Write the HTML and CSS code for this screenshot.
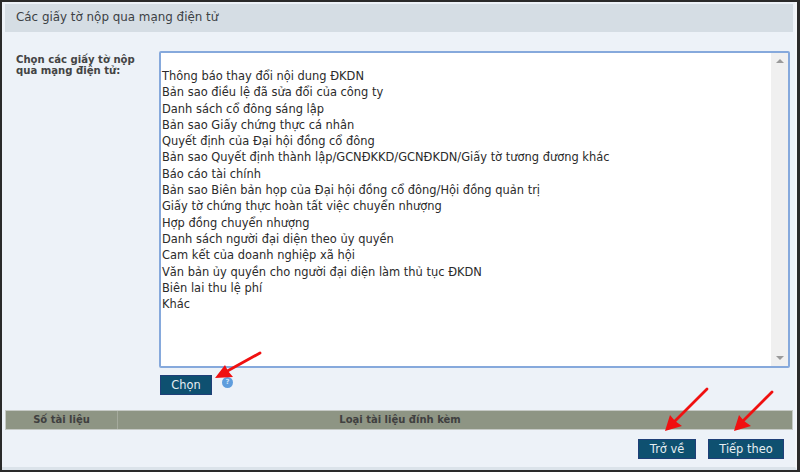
FILE: index.html
```html
<!DOCTYPE html>
<html lang="vi">
<head>
<meta charset="utf-8">
<title>Các giấy tờ nộp qua mạng điện tử</title>
<link rel="stylesheet" href="styles.css">
</head>
<body>
<div class="frame">
  <div class="panel">
    <h2 class="title">Các giấy tờ nộp qua mạng điện tử</h2>
    <div class="form-row">
      <label class="field-label">Chọn các giấy tờ nộp qua mạng điện tử:</label>
      <div class="field">
        <div class="listbox">
          <ul class="options">
            <li>Thông báo thay đổi nội dung ĐKDN</li>
            <li>Bản sao điều lệ đã sửa đổi của công ty</li>
            <li>Danh sách cổ đông sáng lập</li>
            <li>Bản sao Giấy chứng thực cá nhân</li>
            <li>Quyết định của Đại hội đồng cổ đông</li>
            <li>Bản sao Quyết định thành lập/GCNĐKKD/GCNĐKDN/Giấy tờ tương đương khác</li>
            <li>Báo cáo tài chính</li>
            <li>Bản sao Biên bản họp của Đại hội đồng cổ đông/Hội đồng quản trị</li>
            <li>Giấy tờ chứng thực hoàn tất việc chuyển nhượng</li>
            <li>Hợp đồng chuyển nhượng</li>
            <li>Danh sách người đại diện theo ủy quyền</li>
            <li>Cam kết của doanh nghiệp xã hội</li>
            <li>Văn bản ủy quyền cho người đại diện làm thủ tục ĐKDN</li>
            <li>Biên lai thu lệ phí</li>
            <li>Khác</li>
          </ul>
          <div class="scrollbar">
            <span class="arrow-up"></span>
            <span class="arrow-down"></span>
          </div>
        </div>
        <div class="choose-row">
          <button class="btn btn-choose">Chọn</button>
          <span class="help">?</span>
        </div>
      </div>
    </div>
    <div class="table-head">
      <div class="col-no">Số tài liệu</div>
      <div class="col-type">Loại tài liệu đính kèm</div>
    </div>
    <div class="actions">
      <button class="btn btn-back">Trở về</button>
      <button class="btn btn-next">Tiếp theo</button>
    </div>
  </div>
  <svg class="arrows" width="800" height="472" viewBox="0 0 800 472">
    <g fill="none" stroke="#f01010" stroke-width="2.8" stroke-linecap="round">
      <path d="M260 353 L222 374"/>
      <path d="M707 389 L669 427"/>
      <path d="M772 392 L737 427"/>
    </g>
    <g fill="#f01010">
      <path d="M215 378 L225 365 L228 371 L233 377 Z"/>
      <path d="M665 431 L670 415 L675 421 L682 426 Z"/>
      <path d="M734 431 L739 415 L744 421 L751 426 Z"/>
    </g>
  </svg>
</div>
</body>
</html>
```
FILE: styles.css
```css
* { box-sizing: border-box; }
html, body { margin: 0; padding: 0; }
body { width: 800px; height: 472px; overflow: hidden; background: #fff; }
.frame {
  position: relative;
  width: 800px;
  height: 472px;
  background: #2a2a2a;
  padding: 2px 3px 2px 2px;
}
.panel {
  height: 468px;
  background: #edf2f8;
  border-right: 2px solid #f4f6f8;
  border-bottom: 3px solid #dbe3ea;
  padding: 2px 2px 0 3px;
  font-family: "DejaVu Sans", sans-serif;
  color: #333;
}
.title {
  margin: 0;
  height: 28px;
  background: #d5dde4;
  padding-left: 11px;
  font-size: 11.9px;
  font-weight: 400;
  line-height: 27px;
  color: #3c4145;
}
.form-row {
  display: flex;
  margin-top: 19px;
}
.field-label {
  width: 154px;
  padding: 3px 0 0 11px;
  font-size: 10.1px;
  font-weight: 700;
  line-height: 11px;
  color: #444;
}
.field { width: 631px; }
.listbox {
  display: flex;
  justify-content: space-between;
  height: 317px;
  background: #fff;
  border: 2px solid #86a9dc;
  border-radius: 2px;
}
.options {
  list-style: none;
  margin: 0;
  padding: 15px 0 0 1px;
  font-size: 11.45px;
  line-height: 16.3px;
  color: #2b2b2b;
}
.scrollbar {
  width: 17px;
  background: #f0f0f0;
  display: flex;
  flex-direction: column;
  justify-content: space-between;
  align-items: center;
  padding: 6px 0;
}
.arrow-up {
  border: 4px solid transparent;
  border-top: 0;
  border-bottom: 4px solid #9a9a9a;
}
.arrow-down {
  border: 4px solid transparent;
  border-bottom: 0;
  border-top: 4px solid #9a9a9a;
}
.choose-row {
  display: flex;
  align-items: flex-start;
  padding: 7px 0 0 1px;
}
.btn {
  display: block;
  padding: 0;
  height: 20px;
  background: #0e5070;
  border: 1px solid #1f3f78;
  color: #e6eef2;
  font-family: "DejaVu Sans", sans-serif;
  font-size: 11.4px;
  line-height: 18px;
  text-align: center;
}
.btn-choose { width: 52px; }
.help {
  width: 11px;
  height: 11px;
  margin: 2px 0 0 10px;
  border-radius: 50%;
  background: #5f9ddd;
  color: #cfe2f5;
  font-family: "DejaVu Sans", sans-serif;
  font-size: 7px;
  font-weight: 700;
  line-height: 11px;
  text-align: center;
}
.table-head {
  display: flex;
  margin-top: 15px;
  height: 20px;
  background: #8e9584;
  border: 1px solid #c6cac6;
  font-size: 10px;
  font-weight: 700;
  line-height: 18px;
  color: #404040;
  text-align: center;
}
.col-no { width: 112px; border-right: 1px solid #a5aa9d; }
.col-type { flex: 1; padding-right: 110px; }
.actions {
  display: flex;
  justify-content: flex-end;
  gap: 12px;
  margin-top: 9px;
  padding-right: 9px;
}
.btn-back { width: 58px; }
.btn-next { width: 76px; }
.arrows { position: absolute; left: 0; top: 0; pointer-events: none; }
```
